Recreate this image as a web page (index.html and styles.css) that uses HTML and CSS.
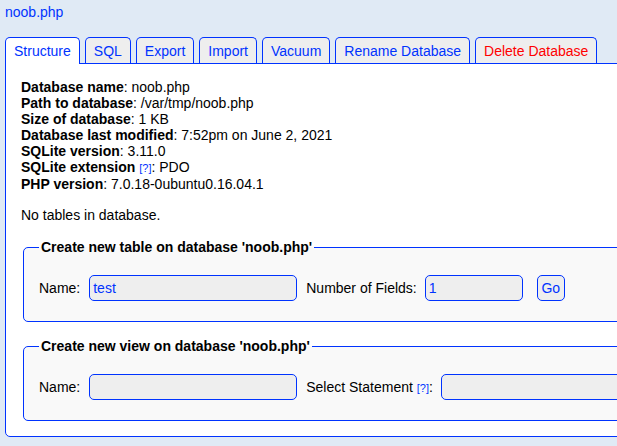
FILE: index.html
```html
<!DOCTYPE html>
<html lang="en">
<head>
<meta charset="utf-8">
<title>noob.php</title>
<link rel="stylesheet" href="styles.css">
</head>
<body>
<div class="page">
  <div class="title"><a href="#" class="link">noob.php</a></div>
  <nav class="tabs">
    <a href="#" class="tab tab-pressed">Structure</a>
    <a href="#" class="tab">SQL</a>
    <a href="#" class="tab">Export</a>
    <a href="#" class="tab">Import</a>
    <a href="#" class="tab">Vacuum</a>
    <a href="#" class="tab">Rename Database</a>
    <a href="#" class="tab tab-delete">Delete Database</a>
  </nav>
  <div class="main">
    <div class="info">
      <div><b>Database name</b>: noob.php</div>
      <div><b>Path to database</b>: /var/tmp/noob.php</div>
      <div><b>Size of database</b>: 1 KB</div>
      <div><b>Database last modified</b>: 7:52pm on June 2, 2021</div>
      <div><b>SQLite version</b>: 3.11.0</div>
      <div><b>SQLite extension</b> <a href="#" class="helpq">[?]</a>: PDO</div>
      <div><b>PHP version</b>: 7.0.18-0ubuntu0.16.04.1</div>
    </div>
    <p class="empty">No tables in database.</p>
    <fieldset class="box">
      <legend>Create new table on database 'noob.php'</legend>
      <div class="row">
        <span class="label">Name:</span>
        <input type="text" class="field field-name" value="test">
        <span class="label label-after">Number of Fields:</span>
        <input type="text" class="field field-num" value="1">
        <button type="button" class="go">Go</button>
      </div>
    </fieldset>
    <fieldset class="box box-view">
      <legend>Create new view on database 'noob.php'</legend>
      <div class="row">
        <span class="label">Name:</span>
        <input type="text" class="field field-name" value="">
        <span class="label label-after">Select Statement <a href="#" class="helpq">[?]</a>:</span>
        <input type="text" class="field field-select" value="">
      </div>
    </fieldset>
  </div>
</div>
</body>
</html>
```

FILE: styles.css
```css
html, body {
  margin: 0;
  padding: 0;
}

body {
  background-color: #e0eaf5;
  color: #000;
  font-family: "Liberation Sans", Arial, sans-serif;
  font-size: 14px;
  line-height: 16px;
  overflow: hidden;
}

.page {
  padding: 4px 0 0 5px;
  width: 1100px;
}

.link {
  color: #0033ff;
  text-decoration: none;
}

.title {
  height: 16px;
  margin-bottom: 17px;
}

.tabs {
  display: flex;
  align-items: flex-start;
  margin-bottom: -1px;
}

.tab {
  display: block;
  padding: 5px 8px 4px 8px;
  margin-right: 5px;
  border: 1px solid #0033ff;
  border-bottom: none;
  border-radius: 5px 5px 0 0;
  background-color: #eeeeee;
  color: #0033ff;
  text-decoration: none;
}

.tab-pressed {
  background-color: #ffffff;
  padding-bottom: 5px;
  position: relative;
  z-index: 1;
}

.tab-delete {
  color: #ff0000;
}

.main {
  border: 1px solid #0033ff;
  border-radius: 0 5px 5px 5px;
  background-color: #ffffff;
  padding: 15px;
}

.helpq {
  font-size: 11px;
  color: #0033ff;
  text-decoration: none;
}

.empty {
  margin: 15px 0 0 0;
}

.box {
  margin: 16px 2px 0 2px;
  padding: 15px;
  border: 1px solid #0033ff;
  border-radius: 5px;
  background-color: #f9f9f9;
}

.box-view {
  margin-top: 16px;
}

.box legend {
  font-weight: bold;
  padding: 0 2px;
  line-height: 16px;
}

.row {
  display: flex;
  align-items: center;
}

.label {
  margin-right: 4px;
  white-space: nowrap;
}

.label-after {
  margin-left: 4px;
  margin-right: 3px;
}

.field {
  box-sizing: border-box;
  height: 26px;
  margin: 5px;
  padding: 3px;
  border: 1px solid #0033ff;
  border-radius: 5px;
  background-color: #eeeeee;
  color: #0033ff;
  font-family: "Liberation Sans", Arial, sans-serif;
  font-size: 14px;
  outline: none;
}

.field-name {
  width: 208px;
}

.field-num {
  width: 98px;
}

.field-select {
  width: 240px;
}

.go {
  box-sizing: border-box;
  width: 28px;
  height: 26px;
  margin: 5px 5px 5px 9px;
  padding: 0;
  border: 1px solid #0033ff;
  border-radius: 5px;
  background-color: #eeeeee;
  color: #0033ff;
  font-family: "Liberation Sans", Arial, sans-serif;
  font-size: 14px;
}
```
